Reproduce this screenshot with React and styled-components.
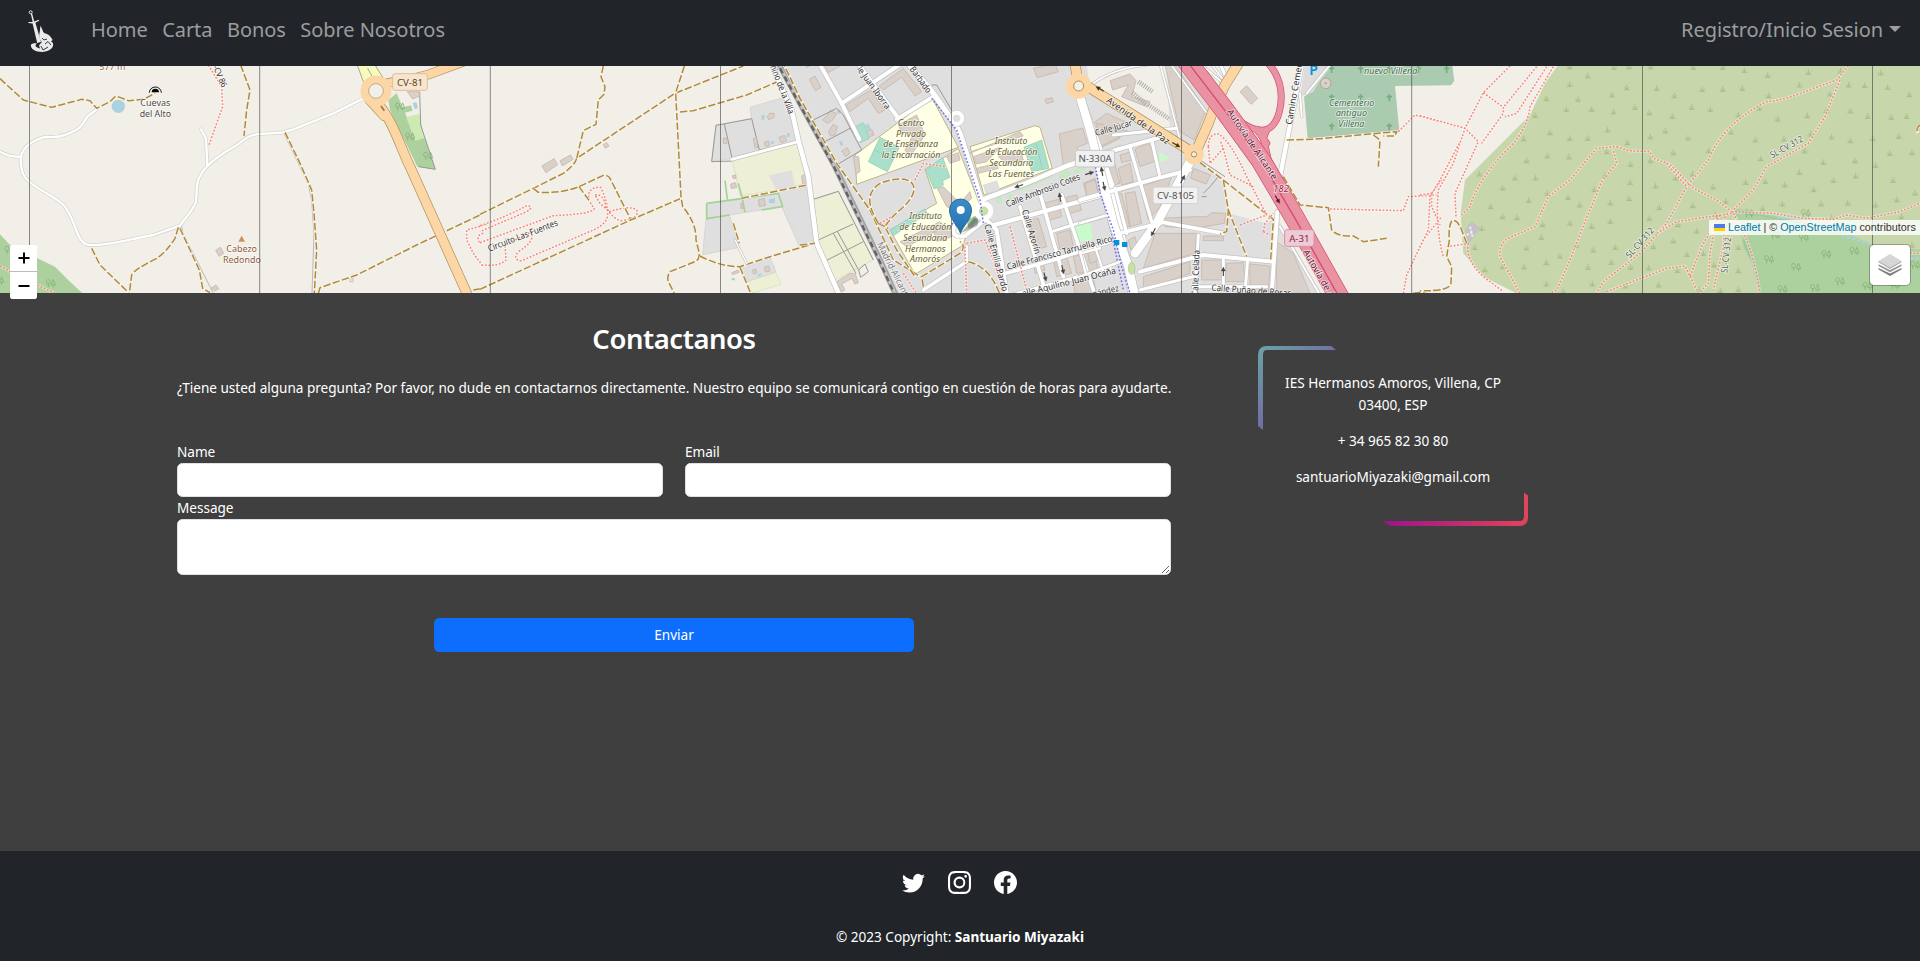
import React from "react";
import styled, { createGlobalStyle, css } from "styled-components";
import { BsTwitter, BsInstagram, BsFacebook } from "react-icons/bs";

const GlobalStyle = createGlobalStyle`
  *, *::before, *::after { box-sizing: border-box; }
  body {
    margin: 0;
    background: #3f3f3f;
    color: #fff;
    font-family: "Segoe UI", "Noto Sans", "Open Sans", sans-serif;
    font-size: 13.6px;
    line-height: 21.6px;
    letter-spacing: -0.03px;
  }
`;

const Page = styled.div`
  display: flex;
  flex-direction: column;
  height: 961px;
  overflow: hidden;
`;

/* ---------- Navigation ---------- */
const Navbar = styled.nav`
  display: flex;
  align-items: center;
  flex: none;
  height: 66px;
  padding: 0 19px 6px 23px;
  background: #212529;
`;
const Brand = styled.a`
  display: flex;
  width: 68px;
`;
const NavLinks = styled.div`
  display: flex;
  gap: 14.5px;
  flex: 1;
`;
const NavLink = styled.a`
  display: inline-flex;
  align-items: center;
  color: #9b9d9f;
  font-size: 20px;
  line-height: 32px;
  white-space: nowrap;
  letter-spacing: -0.06px;
`;
const Caret = styled.span`
  margin: -3px 0 0 6px;
  border: 6px solid transparent;
  border-top-color: currentColor;
  border-bottom: 0;
`;

/* ---------- Map ---------- */
const MapFrame = styled.section`
  position: relative;
  flex: none;
  height: 227px;
`;
const MapSvg = styled.svg`
  display: block;
  width: 100%;
  height: 227px;
  font-family: "Noto Sans", sans-serif;
`;
const line = css`
  fill: none;
  stroke-linejoin: round;
`;
const Track = styled.path`
  ${line}
  stroke: #b08a3c;
  stroke-width: 4.5;
  stroke-dasharray: 22 7;
`;
const TrackHalo = styled.path`
  ${line}
  stroke: #f7f3ea;
  stroke-width: 8;
`;
const FootHalo = styled.path`
  ${line}
  stroke: #fff;
  stroke-opacity: 0.4;
  stroke-width: 9;
`;
const Foot = styled.path`
  ${line}
  stroke: #fa8578;
  stroke-width: 4.6;
  stroke-dasharray: 5.5 5;
`;
const Cycle = styled.path`
  ${line}
  stroke: #6a6af5;
  stroke-width: 4.5;
  stroke-dasharray: 5 6;
`;
const Casing = styled.path`
  ${line}
  stroke: ${(p) => p.$color || "#c3c1bf"};
  stroke-width: ${(p) => p.$w + 4};
  stroke-linecap: round;
`;
const Road = styled.path`
  ${line}
  stroke: ${(p) => p.$color || "#fff"};
  stroke-width: ${(p) => p.$w};
  stroke-linecap: round;
`;
const Fence = styled.path`
  ${line}
  stroke: ${(p) => p.$color || "#989896"};
  stroke-width: 3;
`;
const Building = styled.path`
  fill: #d9d0c9;
  stroke: #c5b7ac;
  stroke-width: 2.5;
`;
const School = styled.path`
  fill: #ffffe5;
  stroke: #bdb68a;
  stroke-width: 3;
`;
const Pitch = styled.path`
  fill: #aae0cb;
  stroke: #8cc9b2;
  stroke-width: 2;
`;
const Label = styled.text`
  fill: ${(p) => p.$color || "#333"};
  font-size: ${(p) => p.$size || 27}px;
  font-style: ${(p) => (p.$italic ? "italic" : "normal")};
  letter-spacing: 0;
  paint-order: stroke;
  stroke: #fff;
  stroke-opacity: 0.65;
  stroke-width: 5px;
`;
const ShieldText = styled.text`
  fill: ${(p) => p.$color};
  font-size: 29px;
  text-anchor: middle;
`;

const origins = {
  west: [0, 0],
  midwest: [480, 60],
  center: [800, 60],
  east: [1080, 60],
  fareast: [1420, 0],
};
const Sheet = ({ at, children }) => (
  <g transform={`translate(${origins[at].join(" ")}) scale(0.33333)`}>{children}</g>
);
const Tracks = ({ d }) => d.map((p) => (
  <g key={p}><TrackHalo d={p} /><Track d={p} /></g>
));
const Feet = ({ d }) => d.map((p) => (
  <g key={p}><FootHalo d={p} /><Foot d={p} /></g>
));
const Roads = ({ list, color, edge }) => (
  <>
    {list.map(([w, d]) => <Casing key={d} $w={w} $color={edge} d={d} />)}
    {list.map(([w, d]) => <Road key={d} $w={w} $color={color} d={d} />)}
  </>
);
const Name = ({ x, y, w, r = 0, children, ...rest }) => (
  <Label
    transform={`translate(${x} ${y}) rotate(${r})`}
    textLength={w}
    lengthAdjust="spacingAndGlyphs"
    {...rest}
  >
    {children}
  </Label>
);
const Shield = ({ x, y, w, fill, stroke, color, children }) => (
  <g>
    <rect x={x} y={y} width={w} height="50" rx="7" fill={fill} stroke={stroke} strokeWidth="3" />
    <ShieldText x={x + w / 2} y={y + 36} $color={color}>{children}</ShieldText>
  </g>
);
const Arrow = ({ x, y, r, color = "#444" }) => (
  <g transform={`translate(${x} ${y}) rotate(${r})`} stroke={color} fill={color}>
    <path d="M-13,0H4" strokeWidth="3.5" />
    <path d="M2,-6L14,0L2,6Z" strokeWidth="1" />
  </g>
);

const scrub = [
  [449,200],[503,228],[620,263],[449,253],[379,296],[474,298],[576,285],[710,265],[763,287],[645,322],[439,328],[515,328],[581,336],[688,339],[757,349],[345,346],[815,322],[871,328],[820,202],[908,202],[973,211],[1043,226],[847,268],[908,268],[967,265],[1046,287],[1138,255],[1165,217],[1262,213],[1286,255],[1334,257],[1382,219],[1403,262],[1468,284],[1230,282],[1018,324],[1073,357],[1162,347],[1219,331],[1291,333],[1343,349],[1414,352],[1460,349],[955,345],[563,390],[736,393],[390,398],[311,417],[449,415],[503,415],[691,411],[804,414],[933,396],[1006,420],[1092,417],[1172,402],[1235,411],[1291,422],[1358,415],[1436,409],[622,428],[382,468],[447,471],[560,455],[320,482],[760,458],[866,452],[944,474],[1022,476],[1154,453],[1409,460],[1476,458],[1210,487],[1305,482],[1366,496],[632,493],[691,482],[178,522],[285,534],[347,534],[555,526],[248,564],[630,547],[707,558],[767,534],[818,522],[879,561],[977,547],[1036,544],[1138,517],[1094,555],[1240,541],[1307,528],[1419,541],[1181,569],[1485,579],[523,569],[382,580],[444,593],[326,601],[571,609],[627,596],[479,615],[212,620],[718,623],[818,617],[917,604],[1028,625],[1087,612],[1203,612],[1283,609],[1430,599],[1366,615],[248,650],[291,653],[368,674],[571,664],[688,655],[450,669],[515,679],[886,645],[1235,653],[1444,650],[185,685],[364,712],[830,693],[774,674],[164,742],[320,744],[468,736],[586,742],[520,750],[700,740],[760,723],[955,742],[420,768],[379,788],[574,787],[801,763],[850,760],[194,809],[312,801],[248,800],[504,802],[632,802],[686,804],[882,795],[772,811],[955,812],[379,852],[517,852],[616,858],[716,855],[839,869],[901,872],[955,869],[430,875],[1476,735],[627,200],[692,200],[582,202],
];
const trees = [[987,640],[1065,705],[1151,712],[1047,778],[1128,801],[1219,763],[1303,753],[1260,844],[1088,868],[1185,864],[1342,858],[1424,856],[1485,795],[1157,640]];

const MapDrawing = () => (
  <MapSvg viewBox="0 66 1920 227" preserveAspectRatio="none" aria-label="Mapa">
    <defs>
      <g id="scrub" stroke="#a5b987" strokeWidth="2.6" fill="none">
        <path d="M-9,6H9M0,6V-9M-1,5L-7,-2M1,5L7,-2" />
      </g>
      <g id="trees" stroke="#86b17b" strokeWidth="2.6" fill="none">
        <path d="M-7,12V0M-7,2C-16,3 -14,-12 -7,-11C0,-12 1,3 -7,2M8,12V4M8,-11L1,5H14Z" />
      </g>
      <path id="cross" d="M0,-10V11M-8,-3H8" stroke="#78ac83" strokeWidth="5" />
    </defs>
    <rect x="0" y="66" width="1920" height="227" fill="#f2efe9" />

    {/* land use */}
    <Sheet at="west">
      <path fill="#add19e" d="M0,703L30,735L112,775L165,800L210,845L250,882H0Z" />
      <use href="#trees" x="152" y="850" /><use href="#trees" x="28" y="750" /><use href="#trees" x="-3" y="842" />
      <path fill="#f7fabf" stroke="#a9ab77" strokeWidth="3" d="M1070,190H1122L1150,235L1090,245ZM1103,205L1118,232" />
      <path fill="#add19e" d="M1165,300L1190,280L1218,345L1245,420L1274,414L1306,508L1252,500L1170,330Z" />
      <path fill="#cdebb0" d="M1218,350L1258,342L1273,414L1246,422Z" />
      <path fill="#add19e" d="M1208,322L1233,316L1238,332L1214,338Z" />
      <Fence d="M1259,275L1262,375L1306,508L1256,500" />
      <Building d="M1222,275H1258V288L1238,297Z" />
      <path fill="#aad3df" d="M1238,310L1249,306L1254,324L1244,328Z" />
      <use href="#trees" x="1200" y="320" /><use href="#trees" x="1230" y="410" /><use href="#trees" x="1284" y="468" />
      <circle cx="355" cy="319" r="20" fill="#aad3df" />
      <Building d="M647,751L662,742L671,760L657,769ZM634,864L648,855L657,866L644,873Z" />
      <path d="M1050,836h9v9h-9z" fill="none" stroke="#aaa" strokeWidth="2" />
    </Sheet>
    <Sheet at="midwest">
      <path fill="#e0dfdf" stroke="#cfcdca" strokeWidth="2" d="M810,142L912,112L952,245L838,270L755,295L695,305L708,196L815,176ZM680,430L895,398L866,346L935,331L945,380L985,375L1005,552L958,558L905,440L680,476ZM678,478L748,465L778,562L668,584ZM780,620L870,592L888,635L803,665Z" />
      <path fill="#eef0d5" stroke="#d8dab8" strokeWidth="2" d="M755,293L955,248L980,370L890,390L780,408ZM803,665L888,637L903,673L815,700ZM1000,418L1075,394L1180,600L1065,660L1010,550Z" />
      <path fill="#e0dfdf" d="M866,346L935,331L945,380L890,392Z" />
      <Fence d="M695,305L708,196L815,176L838,270L950,247M733,192L758,303L695,305M1000,418L1075,394L1180,600M1015,540L1120,492M1038,602L1150,545M1060,520L1128,640M1072,514L1136,630M1136,630L1155,612L1165,635L1142,652Z" />
      <path fill="none" stroke="#a4d399" strokeWidth="5" d="M680,430L785,416L895,400L908,440L845,450M680,430V476L748,465M785,405L795,457M735,362L742,418M775,370L787,415" />
      <Building d="M186,318L222,296L233,314L198,338ZM240,302L272,285L279,298L247,318ZM370,254L380,248L387,258L376,265ZM862,170L868,160H882L882,172L866,179ZM897,232L914,226L920,242L903,248ZM853,246L866,243L869,257L856,260ZM820,235L830,233L833,262L825,265ZM729,235L741,234V250L731,251ZM835,420L853,415L856,436L838,440ZM752,372L766,368L770,382L754,386ZM757,347L768,345V355H759ZM965,348L978,342L982,375L968,370ZM853,622L866,618L870,633L857,636ZM818,630L828,627L829,640L820,642ZM755,638L775,630L777,637L758,644ZM782,430L789,430V445L783,446Z" />
      <Building d="M1070,665L1110,640L1125,640L1135,668L1124,672L1116,655L1085,672L1095,690L1085,695Z" />
      <path fill="#aad3df" d="M866,418L885,414V428L868,430ZM845,165h8v14h-8zM874,243h7v9h-7zM921,219h8v12h-8zM755,654h10v7h-10zM832,644l12,-4v6l-10,4z" />
    </Sheet>
    <Sheet at="center">
      <path fill="#e0dfdf" d="M-60,10H1020L860,90L1190,290L1275,375L1285,460L1400,490L1430,470L1570,710H290L240,600L105,320Z" />
      <path fill="#f2efe9" d="M860,10H1340L1190,250L1180,282L870,90Z" />
      <path fill="#e0dfdf" d="M1100,20L1150,15L1250,160L1180,270L1110,220Z" />
      <School d="M165,285L395,112L475,262L170,373Z" />
      <School d="M270,510L410,430L375,328L475,266L548,455L500,520L490,555L345,643Z" />
      <School d="M510,260L705,197L720,202L757,325L552,405Z" />
      <Building d="M10,-5L40,-12L52,5L20,22ZM28,58L45,48L63,82L46,92ZM75,18L110,0L125,15L85,38ZM138,135L212,90L255,150L235,160L205,115L150,155ZM238,78L310,25L365,95L345,108L305,52L250,90ZM270,-10L300,-10L310,10L280,15ZM160,290L176,290L180,335L168,342ZM68,180L82,165L90,152L110,160L98,180L84,190ZM85,215L100,193L112,200L105,225L92,228ZM125,273L142,263L150,280L137,290ZM195,215L215,208L222,225L205,232Z" />
      <Building d="M295,195L350,165L375,225L330,290L315,270L345,215L305,220ZM248,270L275,255L290,275L262,290ZM440,290L475,278L480,300L450,310ZM412,385L430,380L480,430L510,395L515,415L475,450L440,440ZM300,545L420,485L435,500L320,560ZM510,280L660,215L670,228L520,272ZM520,290L600,262L560,305L528,312ZM530,325L590,310L595,325L535,340ZM700,25L765,12L775,35L712,53ZM735,118L756,113L760,125L740,131ZM778,222L848,204L862,250L832,262L838,295L790,320ZM595,290L660,268L670,300L620,312ZM400,510L450,495L455,530L410,545Z" />
      <Pitch d="M240,232L298,262L262,335L205,305ZM222,268L280,300M165,200L190,188L208,235L180,248ZM378,330L428,292L450,352L428,362L430,375L402,387ZM672,262L725,240L747,325L695,335ZM708,250L728,330M270,510L375,447L382,460L280,527Z" />
      <path fill="#dfdfdf" stroke="#c8c8c8" d="M550,375L590,362L600,390L558,402Z" />
      <path fill="#9fc9a6" d="M500,480L530,465L532,485L505,505Z" />
      <path fill="#c8e8c4" d="M585,415l18,-6l6,18l-18,8zM620,405l14,-4l4,18l-15,5zM775,348q18,-25 38,-12q-2,25 -35,25zM820,330l35,-14l5,12l-35,14zM655,385L755,345L758,352L660,395Z" />
      <Building d="M730,430L775,418L785,470L745,482ZM800,412L830,405L845,450L805,462ZM850,370L885,355L895,395L860,408ZM690,480L715,475L740,560L705,570ZM770,520L810,510L820,560L780,570ZM700,600L725,595L735,630L705,640ZM760,600L800,590L815,640L770,650ZM820,590L880,572L895,630L830,640ZM820,670L880,655L890,700H825Z" />
      <path fill="#c8facc" d="M820,497L865,487L878,537L832,547Z" />
      <path fill="#aad3df" d="M110,152l10,-3l4,9l-10,4zM117,245l7,-3l6,12l-7,4zM195,195l10,-4l9,18l-10,4z" />
    </Sheet>
    <Sheet at="east">
      <path fill="#aacbaf" d="M672,110L690,100L745,30L760,10H1116L1123,62L1113,76L945,78L958,213L683,235Z" />
      {[[755,28],[842,28],[928,28],[1015,28],[755,113],[842,113],[928,113],[755,200],[928,200],[1100,28]].map(([x, y]) => <use key={`${x}-${y}`} href="#cross" x={x} y={y} />)}
      <path fill="#dddcdb" d="M660,110L675,15H745L700,95Z" />
      <circle cx="737" cy="70" r="16" fill="#d9d0c9" stroke="#b5a296" strokeWidth="3" /><circle cx="737" cy="70" r="3" fill="#a99" />
      <Building d="M255,15H285L378,150L342,240L300,215ZM480,95L500,77L533,115L513,133ZM90,62L150,42L168,62L155,110L210,125L200,140L125,110L145,75L98,90ZM50,190L150,215L60,260ZM25,200L80,160L135,185L100,205L120,235L65,262L50,235Z" />
      <Building d="M165,268L205,250L235,300L180,320ZM120,285L150,276L155,300L125,308ZM115,325L150,310L160,365L125,375ZM75,300L100,295L120,370L88,380ZM180,380L275,350L240,440L205,480ZM135,400L165,395L185,490L150,500ZM100,410L125,400L150,500L120,500ZM15,370L45,360L55,400L20,410ZM340,325L392,345L378,372L332,355ZM345,470L380,470L395,458L437,460L433,490L345,505L255,500L240,475ZM225,520L350,520L345,580L190,625ZM370,528H430V542H370ZM145,540L165,530L172,558L152,568ZM365,600L425,600V660H365ZM440,610L490,608L495,665H435ZM510,612L570,618L565,700H510ZM190,650L330,605V640L190,690ZM20,560L50,550L60,600L30,610ZM590,545L640,580L690,700H590Z" />
      <path fill="#c8facc" d="M238,275L270,295L238,308ZM0,495L30,487L40,535L0,545Z" />
      <g stroke="#aaa" strokeWidth="14" fill="none" strokeDasharray="3 4"><path d="M175,65L217,95M157,98L198,132M205,135L270,178" /></g>
    </Sheet>
    <Sheet at="fareast">
      <path fill="#c8d7ab" d="M418,190L375,250L330,345L135,540L122,640L130,760L190,830L300,885H1505V190Z" />
      <path fill="#add19e" d="M935,625L1050,650L1250,685L1360,735L1505,750V885H1022L1000,790L970,745L960,670Z" />
      <path fill="none" stroke="#8cc49a" strokeWidth="8" strokeOpacity="0.55" d="M950,630L1250,690M970,720L1000,790L1022,885" />
      <path fill="none" stroke="#aad3df" strokeWidth="8" strokeDasharray="10 6" d="M1070,652H1150M1265,705L1360,735M1470,775H1500" />
      <path fill="#c5c1c5" d="M155,662L179,683L145,735L135,690Z" />
      <path stroke="#eee" strokeWidth="6" strokeDasharray="7 5" d="M150,680L158,710M140,705L162,695" />
      {scrub.map(([x, y]) => <use key={`${x}-${y}`} href="#scrub" x={x} y={y} />)}
      {trees.map(([x, y]) => <use key={`${x}-${y}`} href="#trees" x={x} y={y} />)}
    </Sheet>

    {/* paths and roads */}
    <Sheet at="west">
      <Fence $color="#b9b8b7" d="M545,675L548,698L640,880M852,400L925,552L935,600L942,700L936,880" />
      <Roads edge="#d3d1ce" list={[
        [7, "M0,455Q30,472 60,470"],
        [7, "M290,328L262,350C245,380 235,390 200,403C160,418 150,408 130,412C90,425 65,445 62,475C62,520 75,535 90,547C130,580 170,590 195,620C225,665 225,690 240,715C255,740 270,735 290,735C340,732 400,715 460,705L540,677C560,650 580,630 588,605C592,570 585,550 605,520C620,495 660,465 700,442C735,420 740,405 780,402L850,397L880,388L1000,340L1060,310L1085,298"],
        [7, "M603,388L618,415L622,495"],
      ]} />
      <Tracks d={["M0,236L70,300L155,322L245,298L270,302L290,325L330,305L345,290L360,292L385,302L430,298L465,280","M722,195L750,270L740,330L732,408","M855,397L900,490L935,570L942,640L950,750L943,880","M275,745L300,795L388,880","M535,682L525,715Q500,755 470,775Q400,810 395,825L388,880","M540,685L598,810L608,865L630,878","M955,880L960,863L1070,825L1250,735L1440,645","M1420,870L1440,866"]} />
      <Feet d={["M625,195L665,260L668,320L650,370L627,435","M0,798L60,830L165,880","M1460,673L1400,690L1400,720L1420,760L1450,800","M1450,700Q1425,705 1440,730"]} />
      <Roads edge="#ae8f55" color="#fcd6a4" list={[[25, "M1390,185L1290,222C1240,240 1190,240 1140,255"],[27, "M1125,300C1180,360 1200,440 1230,500L1405,890"],[20, "M1100,255L1105,300L1150,350"]]} />
      <circle cx="1128" cy="273" r="34" fill="#f2efe9" stroke="#fcd6a4" strokeWidth="25" />
      <circle cx="1128" cy="273" r="22" fill="#f2efe9" stroke="#ae8f55" strokeWidth="2" />
      <path d="M1143,318L1153,332" stroke="#997a3c" strokeWidth="5" />
    </Sheet>
    <Sheet at="midwest">
      <Feet d={["M0,497Q80,470 140,437Q165,440 140,455L0,515","M0,548Q130,500 220,467Q340,462 343,445Q320,420 328,395Q340,380 362,382Q385,430 383,460Q385,490 340,510L125,602Q95,600 115,575Q165,545 155,515L75,555L78,600Q60,620 0,615","M345,405Q370,400 378,440Q400,480 425,482Q480,475 470,450Q450,435 388,455L360,430Z"]} />
      <Tracks d={["M0,463L160,385L250,340Q285,315 290,295L585,100L790,18","M370,18L363,50L375,80L372,103L355,120L348,193L310,212L290,295","M160,385L175,397Q250,400 297,380L370,346Q385,345 390,355L452,478M297,380L330,425","M0,688L452,480L603,415","M613,18L587,98L603,410L608,440Q650,490 648,540L658,580Q658,600 645,605L570,635Q560,650 565,665L583,700","M600,156L640,152L800,105L890,66","M660,588Q720,620 780,620L870,590L1005,550M780,622L812,700M760,490L778,550","M785,415L980,375"]} />
      <Roads list={[[9, "M755,298L955,245"],[14, "M870,0L935,150L955,240L985,350L1010,550L1080,710"],[4, "M765,540L800,610"]]} />
    </Sheet>
    <Sheet at="center">
      <path fill="none" stroke="#a2a2a2" strokeWidth="17" d="M-70,0L0,130L105,320L240,600L290,710" />
      <path fill="none" stroke="#c4c4c4" strokeWidth="7" d="M-70,0L0,130L105,320L240,600L290,710" />
      <path fill="none" stroke="#626262" strokeWidth="7" strokeDasharray="17 11" d="M-73,0L-3,130L102,320L237,600L287,710" />
      <Fence d="M40,180L110,145L130,165L185,270L110,315L75,250L40,180M75,245L150,205M395,75L410,75L455,150" />
      <Roads list={[
        [12, "M55,5L125,130L178,238"],[12, "M125,130L290,20L320,0"],[12, "M170,5L290,168"],[12, "M290,178L400,110"],
        [16, "M320,5L400,100L470,200L480,220L545,425"],[14, "M470,200V175"],
        [14, "M545,420L690,365L800,318L960,265"],[13, "M575,497L900,408L1000,375"],[12, "M560,480L590,510L620,700"],
        [11, "M720,400L790,650"],[11, "M660,440L735,690"],[11, "M785,405L850,600L880,690"],[11, "M600,645L760,600L930,545"],[11, "M640,705L930,625"],[9, "M755,515L850,485L930,465"],
        [10, "M370,690L500,605L500,560"],[12, "M555,480L495,528Q460,535 460,510L465,490"],[22, "M840,110L890,250L940,400L970,560L1000,720"],
      ]} />
      <circle cx="470" cy="175" r="24" fill="#fff" stroke="#ccc" strokeWidth="2" /><circle cx="470" cy="175" r="11" fill="#e0dfdf" />
      <circle cx="551" cy="453" r="29" fill="#fff" /><circle cx="551" cy="453" r="13" fill="#c8e0a4" stroke="#aac288" />
      <Tracks d={["M-55,0L0,115L110,310L210,450L280,600L370,655","M235,490C205,440 195,400 240,370C290,350 345,350 342,390C335,435 280,455 255,500L290,570L345,650","M370,680L365,650L480,580Q500,560 480,545","M505,605Q570,620 600,705","M235,490L265,505","M0,555L45,550"]} />
      <Feet d={["M345,360L370,310L440,320M240,490L275,470","M500,550L555,540L580,600L610,690","M495,560L500,700","M630,500L680,690","M310,640L350,700"]} />
      <Cycle d="M395,115L470,210L500,300L540,420L550,490M895,350L912,430L935,520L970,690M455,490L480,500" />
    </Sheet>
    <Sheet at="east">
      <Fence d="M370,400L390,380L415,350M360,300L435,350M365,410L380,410" />
      <Roads list={[
        [5, "M0,105Q60,40 160,20L200,15"],[5, "M240,10L300,240M270,10L385,165M385,0L430,60M360,10L430,70"],[9, "M420,10L435,45M100,225L290,205"],
        [12, "M0,420L230,355L330,330"],[12, "M90,275L240,232"],[10, "M150,262L215,485M215,240L240,350"],[10, "M105,385L140,520"],
        [11, "M120,520L250,487L430,520"],[9, "M355,525L345,705M430,597V690M503,597L495,700"],[12, "M180,635L370,585L580,605"],[12, "M592,455L575,700"],[9, "M180,690L340,650M340,680H560"],[8, "M0,490L100,460M0,580L60,565M0,650L120,605"],
        [25, "M0,110L30,210L60,330L100,490L145,620L165,710"],[26, "M330,305L230,490L165,580"],[7, "M45,560L70,635M0,575L20,650"],
        [13, "M665,15L600,350"],[6, "M680,100L750,15M660,100L665,170"],[6, "M600,500L720,705"],
      ]} />
      <ellipse cx="155" cy="625" rx="10" ry="18" fill="#c8e0a4" stroke="#aac288" strokeWidth="2" />
      <Cycle d="M45,310L60,400L100,510L125,620L150,700" />
      <Tracks d={["M360,308L430,360L580,478L572,600M430,360L445,450L440,515L420,522M445,450L500,590","M620,240L700,238L870,222L950,215L945,228H910M880,225L900,240L895,320","M610,350L660,435L745,443L755,510Q770,530 820,528L850,545L920,535","M1000,700L1080,688"]} />
      <Feet d={["M385,260Q385,220 415,222Q450,240 500,350L560,465L480,495M385,260L390,310L430,265L420,240M430,265L450,345L520,380M550,515L555,490L580,460M550,515L570,525","M750,447L970,452L985,410L1070,405M955,215L1005,165L1080,185","M970,700L980,645L1030,540L1085,470M1085,360L1055,400V440L1080,495"]} />
      <Roads edge="#d64a76" color="#e892a2" list={[[17, "M560,5C605,50 610,110 598,155C588,195 565,215 540,210C510,208 480,190 430,140"],[17, "M560,210L550,235L565,300L600,360"],[17, "M530,208L560,250"]]} />
      <Roads edge="#ae8f55" color="#fcd6a4" list={[[28, "M0,65L342,280"],[28, "M350,270L385,190L400,150L435,75L485,-5"],[28, "M-20,-10L-10,40"]]} />
      <Roads edge="#d64a76" color="#e892a2" list={[[57, "M322,5L437,155L542,300L642,470L785,725"]]} />
      <path fill="none" stroke="#d64a76" strokeWidth="4" d="M322,5L437,155L542,300L642,470L785,725" />
      <circle cx="342" cy="283" r="30" fill="#fcd6a4" /><circle cx="342" cy="283" r="8" fill="#f2efe9" stroke="#ae8f55" strokeWidth="3" />
      <circle cx="-4" cy="78" r="38" fill="#fcd6a4" /><circle cx="-4" cy="78" r="15" fill="#f2efe9" stroke="#ae8f55" strokeWidth="3" />
      <path fill="#0092da" d="M102,540h16v15h-16zM126,546h16v15h-16z" />
    </Sheet>
    <Sheet at="fareast">
      <Feet d={["M270,198L190,278L135,385L100,490L55,570Q45,680 70,770M190,278L250,322V340L185,430","M350,200L250,322M380,200L290,340L255,350M0,347L135,385L175,425L105,580L108,650","M400,200L330,320Q320,400 250,460Q170,550 150,620L120,650M118,430L60,540L30,590L25,690L0,740M0,585L35,580","M145,730Q135,780 190,830L250,875M80,740L140,732","M300,880L240,770Q235,730 270,712L345,680L385,590L450,540L530,445L590,440M395,878L410,870L450,780L485,690L545,545L590,490L580,450M590,440L625,452L690,455L700,475L750,493L820,565L890,600L935,635","M740,490L800,560L740,670L660,760L550,845L530,880M805,555L865,480Q910,370 1040,305Q1100,300 1180,265L1250,240L1285,198M1260,240L1215,350L1165,430L1040,500L1000,570L935,635","M935,635L1060,640L1150,655L1240,658L1280,645L1340,655L1440,635L1500,610M935,640L770,665L710,700M560,875L740,805L795,798L830,870M900,645L845,740L810,830M890,650L870,760L865,850L835,880M915,650L910,740L880,870M940,640L975,710Q1000,760 1020,880M1470,760H1500"]} />
      <Tracks d={["M140,730L125,690Q110,655 95,663Q85,680 88,720L80,770L95,800L93,850Q90,875 0,872","M1500,375Q1485,385 1495,402"]} />
    </Sheet>

    {/* labels */}
    <Sheet at="west">
      <Name x="298" y="209" w="78" $color="#a0684c">577 m</Name>
      <path d="M448,278A18,17 0 0 1 484,278" fill="none" stroke="#111" strokeWidth="3" /><path d="M455,277A11,11 0 0 1 477,277Z" fill="#000" />
      <Name x="421" y="318" w="90" $color="#504a45">Cuevas</Name>
      <Name x="419" y="351" w="94" $color="#504a45">del Alto</Name>
      <path d="M725,707L735,725H715Z" fill="#d08f55" />
      <Name x="679" y="756" w="92" $color="#8f5c3a">Cabezo</Name>
      <Name x="669" y="788" w="114" $color="#8f5c3a">Redondo</Name>
      <Name x="638" y="200" w="70" r="66" $size="25">-CV 86</Name>
      <Shield x={1178} y={221} w={104} fill="#f7e5cf" stroke="#dfc095" color="#5a4526">CV-81</Shield>
    </Sheet>
    <Sheet at="midwest">
      <Name x="28" y="575" w="222" r="-21">Circuito Las Fuentes</Name>
      <Name x="868" y="12" w="162" r="69">mino de la Villa</Name>
    </Sheet>
    <Sheet at="center">
      <Name x="170" y="28" w="150" r="54">le Juan Iborra</Name>
      <Name x="328" y="28" w="90" r="54">Barbado</Name>
      {[["Centro",293,197,80],["Privado",288,230,90],["de Enseñanza",250,262,164],["la Encarnación",245,295,176],["Instituto",584,253,98],["de Educación",556,285,156],["Secundaria",568,318,132],["Las Fuentes",565,350,137],["Instituto",328,478,98],["de Educación",298,510,156],["Secundaria",310,543,132],["Hermanos",315,575,122],["Amorós",330,607,90]].map(([t, x, y, w]) => (
        <Name key={`${x}-${y}`} x={x} y={y} w={w} $italic $color="#666128">{t}</Name>
      ))}
      <Name x="622" y="442" w="236" r="-21">Calle Ambrosio Cotes</Name>
      <Name x="665" y="452" w="138" r="73">Calle Azorín</Name>
      <Name x="553" y="495" w="230" r="75">Calle Emilia Pardo B</Name>
      <Name x="623" y="629" w="326" r="-15">Calle Francisco Tarruella Rico</Name>
      <Name x="668" y="710" w="290" r="-14">alle Aquilino Juan Ocaña</Name>
      <Name x="230" y="552" w="190" r="63" $color="#777">Madrid-Alicante</Name>
      <Arrow x={657} y={378} r={160} /><Arrow x={868} y={340} r={-18} /><Arrow x={780} y={412} r={-98} /><Arrow x={735} y={650} r={75} /><Arrow x={788} y={628} r={78} />
      <Shield x={826} y={271} w={118} fill="#f1f1f1" stroke="#c8c8c8" color="#555">N-330A</Shield>
    </Sheet>
    <Sheet at="east">
      <Name x="77" y="125" w="225" r="35">Avenida de la Paz</Name>
      <Name x="48" y="228" w="114" r="-16">Calle Júcar</Name>
      <Name x="440" y="155" w="248" r="56" $color="#5c1735">Autovía de Alicante</Name>
      <Name x="668" y="575" w="248" r="60" $color="#5c1735">Autovía de Alicante</Name>
      <Name x="635" y="195" w="190" r="-80">Camino Cemen</Name>
      <Name x="354" y="708" w="138" r="-88">Calle Celada</Name>
      <Name x="394" y="692" w="240" r="4">Calle Puñao de Rosas</Name>
      <Name x="40" y="712" w="80" r="-14">nández</Name>
      {[["nuevo Villena",852,41,160],["Cementerio",747,137,136],["antiguo",767,169,94],["Villena",775,201,78]].map(([t, x, y, w]) => (
        <Name key={t} x={x} y={y} w={w} $italic $color="#3f6b4d">{t}</Name>
      ))}
      <Name x="579" y="396" w="48" $italic $color="#a0304f">182</Name>
      <text x="688" y="45" fontSize="42" fontWeight="600" fill="#0092da">P</text>
      <Arrow x={60} y={87} r={210} color="#443311" /><Arrow x={288} y={254} r={30} color="#443311" /><Arrow x={592} y={418} r={60} color="#5c1735" />
      <Arrow x={66} y={335} r={-100} /><Arrow x={72} y={378} r={78} /><Arrow x={308} y={358} r={-62} /><Arrow x={220} y={516} r={118} /><Arrow x={430} y={635} r={-90} />
      <Shield x={219} y={381} w={135} fill="#f1f1f1" stroke="#d0d0d0" color="#555">CV-8105</Shield>
      <Shield x={614} y={509} w={88} fill="#edccd5" stroke="#d98fa6" color="#8c2348">A-31</Shield>
    </Sheet>
    <Sheet at="fareast">
      <Name x="1057" y="475" w="108" r="-29" $color="#555b53">SL-CV 312</Name>
      <Name x="629" y="776" w="112" r="-48" $color="#555b53">SL-CV 312</Name>
      <Name x="922" y="820" w="108" r="-84" $color="#555b53">SL-CV 312</Name>
    </Sheet>

    {/* tile seams */}
    <path d="M29.5,66V293M259.7,66V293M490.3,66V293M720.5,66V293M951.5,66V293M1181.5,66V293M1411.7,66V293M1642.5,66V293M1872.5,66V293" stroke="#3f3f3f" strokeOpacity="0.6" />
  </MapSvg>
);

const Pin = styled.svg`
  position: absolute;
  left: 947px;
  top: 132px;
  width: 68px;
  height: 42px;
`;
const ZoomControl = styled.div`
  position: absolute;
  z-index: 2;
  left: 10px;
  top: 179px;
  width: 27px;
  display: flex;
  flex-direction: column;
  background: #fff;
  border-radius: 3px;
  overflow: hidden;
`;
const ZoomButton = styled.button`
  height: 27px;
  padding: 0;
  border: 0;
  border-bottom: ${(p) => (p.$first ? "1px solid #bbb" : "0")};
  background: #fff;
  color: #000;
  display: grid;
  place-items: center;
`;
const LayersControl = styled.button`
  position: absolute;
  right: 9px;
  top: 178px;
  width: 42px;
  height: 42px;
  padding: 0;
  display: grid;
  place-items: center;
  border: 1px solid rgba(0, 0, 0, 0.25);
  border-radius: 5px;
  background: #fff;
  background-clip: padding-box;
`;
const Attribution = styled.div`
  position: absolute;
  right: 0;
  top: 154px;
  width: 211px;
  height: 15px;
  padding-left: 5px;
  display: flex;
  align-items: center;
  gap: 3px;
  background: rgba(255, 255, 255, 0.8);
  color: #333;
  font: 10.8px/15px "Liberation Sans", Arial, sans-serif;
  letter-spacing: 0;
  white-space: nowrap;
  a { color: #0078a8; }
`;

/* ---------- Contact ---------- */
const Contact = styled.main`
  flex: none;
  height: 558px;
  display: flex;
  gap: 87px;
  padding: 28.8px 0 0 177px;
`;
const FormColumn = styled.section`
  width: 994px;
`;
const Title = styled.h2`
  margin: 0 0 21px;
  font-size: 27.4px;
  line-height: 34.6px;
  font-weight: 600;
  text-align: center;
  letter-spacing: -0.4px;
`;
const Intro = styled.p`
  margin: 0 0 42.2px;
  white-space: nowrap;
`;
const FieldRow = styled.div`
  display: grid;
  grid-template-columns: 1fr 1fr;
  column-gap: 22px;
`;
const Field = styled.label`
  display: flex;
  flex-direction: column;
`;
const field = css`
  border: 1px solid #dee2e6;
  border-radius: 5.4px;
  background: #fff;
  width: 100%;
`;
const Input = styled.input`
  ${field}
  height: 34.4px;
`;
const TextArea = styled.textarea`
  ${field}
  height: 56px;
  resize: vertical;
`;
const Submit = styled.button`
  display: block;
  width: 480px;
  height: 34.4px;
  margin: 43.2px 0 0 257px;
  border: 0;
  border-radius: 5.4px;
  background: #0d6efd;
  color: #fff;
  font: inherit;
`;
const Card = styled.address`
  position: relative;
  width: 270px;
  height: 180px;
  margin-top: 24.2px;
  padding: 26.4px 20px 0;
  font-style: normal;
  text-align: center;
`;
const CardFrame = styled.svg`
  position: absolute;
  inset: 0;
`;
const CardLine = styled.p`
  margin: 0 0 14.4px;
`;

/* ---------- Footer ---------- */
const Footer = styled.footer`
  flex: none;
  height: 110px;
  display: flex;
  flex-direction: column;
  align-items: center;
  padding-top: 19px;
  background: #212529;
`;
const Social = styled.div`
  display: flex;
  align-items: center;
  gap: 23px;
  height: 24px;
  font-size: 23px;
  margin-right: 1px;
`;
const Copyright = styled.div`
  margin-top: 31.5px;
`;

const Logo = () => (
  <svg width="32" height="48" viewBox="0 -4 32 48" fill="#e9eaea">
    <circle cx="7.7" cy="2.3" r="1.5" fill="none" stroke="#e9eaea" strokeWidth="1" />
    <path d="M7.8,3.8L9.2,3.7L11.2,11.5L15.8,9.8L16.2,10.7L12.4,12.7L18,32L14.2,33L9.6,13.6L5.3,13.1L5.5,12.1L9.7,11.9Z" />
    <path d="M18.8,32C14,26 17.5,23.5 17.2,16C20,19 19.3,21.8 21.500,23.2C24.5,23.5 28,26.3 29.6,30L28,31.5L30,33C31,38 27,41 19.5,42C12,42 7,38.5 8,34.5C10,33 12.5,33 14,33.5C11,35.5 13,37.5 17,38.5L16,35.5Z" />
    <path d="M19,28L21,30L24,29M22,34L25,31.5L28,35M18,36L20,40L25,37" stroke="#212529" fill="none" strokeWidth="0.9" />
  </svg>
);

export default function App() {
  return (
    <Page>
      <GlobalStyle />
      <Navbar>
        <Brand href="#"><Logo /></Brand>
        <NavLinks>
          <NavLink>Home</NavLink>
          <NavLink>Carta</NavLink>
          <NavLink>Bonos</NavLink>
          <NavLink>Sobre Nosotros</NavLink>
        </NavLinks>
        <NavLink>Registro/Inicio Sesion<Caret /></NavLink>
      </Navbar>

      <MapFrame>
        <MapDrawing />
        <Pin viewBox="0 0 68 42">
          <defs>
            <linearGradient id="pin" x1="0" y1="0" x2="0" y2="1"><stop offset="0" stopColor="#3b8dcc" /><stop offset="1" stopColor="#216fae" /></linearGradient>
          </defs>
          <path d="M14,35L27,20Q34,20 30,28Z" fill="#000" opacity="0.3" />
          <path d="M13.5,35.5C11,27 2.5,22 2.5,12A11,11 0 0 1 24.5,12C24.5,22 16,27 13.5,35.5Z" fill="url(#pin)" stroke="#2e6c97" strokeWidth="1" />
          <circle cx="13.7" cy="12" r="4" fill="#fff" />
        </Pin>
        <ZoomControl>
          <ZoomButton $first aria-label="Zoom in"><svg width="12" height="12"><path d="M6,.5V11.5M.5,6H11.5" stroke="#000" strokeWidth="2" /></svg></ZoomButton>
          <ZoomButton aria-label="Zoom out"><svg width="12" height="12"><path d="M.5,6H11.5" stroke="#000" strokeWidth="2" /></svg></ZoomButton>
        </ZoomControl>
        <LayersControl aria-label="Layers">
          <svg width="24" height="24" viewBox="0 0 24 24">
            <path d="M0.5,15L12,20.5L23.5,15L23.5,16.5L12,23L0.5,16.5Z" fill="#7d7d7d" />
            <path d="M0.5,11.2L12,17L23.5,11.2V13L12,19.2L0.5,13Z" fill="#959595" />
            <path d="M12,1L23.5,8L12,14.5L0.5,8Z" fill="#d6d6d6" />
            <path d="M0.5,8L12,14.5L23.5,8V9.3L12,16L0.5,9.3Z" fill="#ababab" />
          </svg>
        </LayersControl>
        <Attribution>
          <svg width="11" height="8"><path d="M0,0H11V4H0Z" fill="#4c7be1" /><path d="M0,4H11V7H0Z" fill="#ffd500" /></svg>
          <a>Leaflet</a> | © <a>OpenStreetMap</a> contributors
        </Attribution>
      </MapFrame>

      <Contact>
        <FormColumn>
          <Title>Contactanos</Title>
          <Intro>¿Tiene usted alguna pregunta? Por favor, no dude en contactarnos directamente. Nuestro equipo se comunicará contigo en cuestión de horas para ayudarte.</Intro>
          <FieldRow>
            <Field>Name<Input /></Field>
            <Field>Email<Input /></Field>
          </FieldRow>
          <Field>Message<TextArea /></Field>
          <Submit>Enviar</Submit>
        </FormColumn>
        <Card>
          <CardFrame width="270" height="180" viewBox="0 0 270 180">
            <defs>
              <linearGradient id="cool" gradientUnits="userSpaceOnUse" x1="0" y1="0" x2="60" y2="60"><stop offset="0" stopColor="#6aa4a6" /><stop offset="1" stopColor="#7458a3" /></linearGradient>
              <linearGradient id="warm" gradientUnits="userSpaceOnUse" x1="125" y1="180" x2="270" y2="160"><stop offset="0" stopColor="#98158a" /><stop offset="1" stopColor="#e2455a" /></linearGradient>
            </defs>
            <path fill="url(#cool)" d="M0,80V9Q0,0 9,0H73L78,4H9Q5,4 5,9V84Z" />
            <path fill="url(#warm)" d="M125,175H262Q266,175 266,170V146.500L270,149.500V171Q270,180 261,180H132Z" />
          </CardFrame>
          <CardLine>IES Hermanos Amoros, Villena, CP<br />03400, ESP</CardLine>
          <CardLine>+ 34 965 82 30 80</CardLine>
          <CardLine>santuarioMiyazaki@gmail.com</CardLine>
        </Card>
      </Contact>

      <Footer>
        <Social><BsTwitter /><BsInstagram /><BsFacebook /></Social>
        <Copyright>© 2023 Copyright: <b>Santuario Miyazaki</b></Copyright>
      </Footer>
    </Page>
  );
}
